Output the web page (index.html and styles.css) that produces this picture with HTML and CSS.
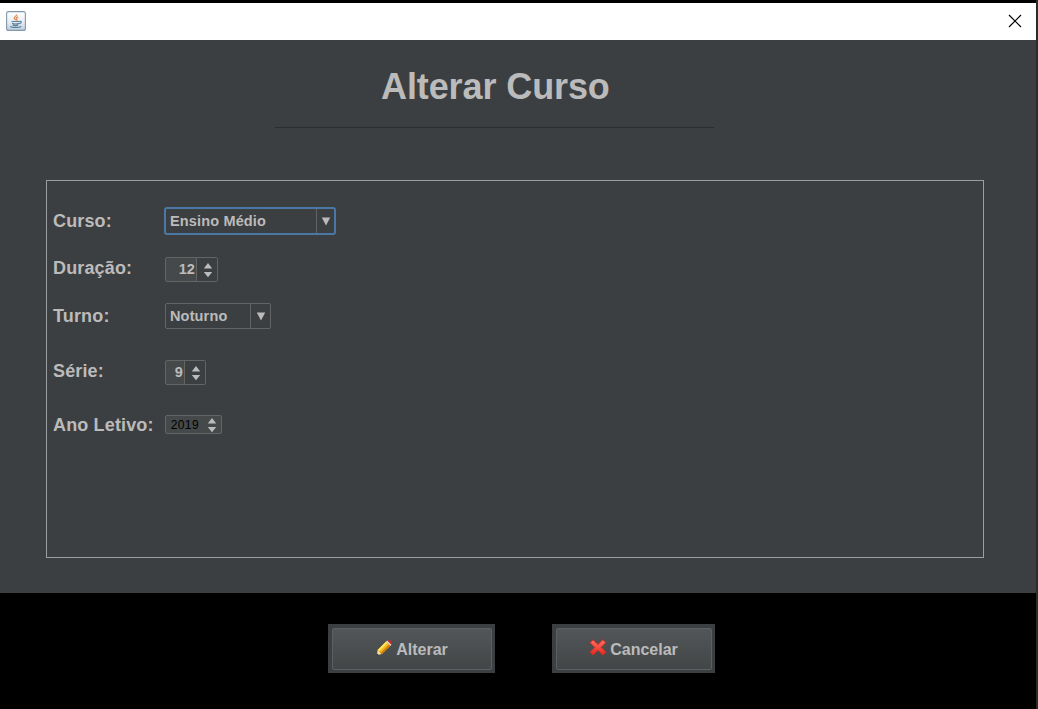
FILE: index.html
```html
<!DOCTYPE html>
<html lang="pt-BR">
<head>
<meta charset="utf-8">
<title>Alterar Curso</title>
<link rel="stylesheet" href="styles.css">
</head>
<body>
<div class="window">
  <header class="titlebar">
    <svg class="java" width="20" height="20" viewBox="0 0 20 20">
      <defs><linearGradient id="jb" x1="0" y1="0" x2="0" y2="1"><stop offset="0" stop-color="#fff"/><stop offset=".55" stop-color="#e8eef3"/><stop offset="1" stop-color="#b9cddd"/></linearGradient></defs>
      <rect x=".6" y=".6" width="18.8" height="18.8" rx="2" fill="url(#jb)" stroke="#8498aa" stroke-width="1.1"/>
      <path d="M10.600 3.500c.8 1.700-2.800 2.200-2.400 3.700.2.900 1.400 1.100 1.400 2.100M12.300 5.900c-2 .8-2.100 1.300-1.500 2.200.5.700.1 1.100-.4 1.500" fill="none" stroke="#e0905a" stroke-width="1.400"/>
      <path d="M5.500 10.500h8M6 12.400c2 .7 5 .7 7 0M6.700 14.200c2 .5 3.800.5 5.500 0M13.600 10.300c2.400-.5 2.200 2-.5 2.400M4.300 15.400c1.200 1.400 9.500 1.400 11 0" fill="none" stroke="#5d7f9a" stroke-width="1.200"/>
    </svg>
    <svg class="close" width="14" height="14" viewBox="0 0 14 14"><path d="M1 1l12 12M13 1L1 13" stroke="#000" stroke-width="1.200"/></svg>
  </header>
  <main class="content">
    <h1 class="title">Alterar Curso</h1>
    <div class="rule"></div>
    <section class="panel">
      <div class="row curso"><span class="label">Curso:</span>
        <div class="combo focused"><span class="value">Ensino Médio</span><span class="drop"><svg width="10" height="9" viewBox="0 0 10 9"><path d="M.8.500h8.400L5 8.500z"/></svg></span></div></div>
      <div class="row duracao"><span class="label">Duração:</span>
        <div class="spinner"><span class="num">12</span><span class="arrows"><svg width="10" height="16" viewBox="0 0 10 16"><path d="M.8 6.500h8.400L5 1zM.8 10h8.400L5 15.200z"/></svg></span></div></div>
      <div class="row turno"><span class="label">Turno:</span>
        <div class="combo"><span class="value">Noturno</span><span class="drop"><svg width="10" height="9" viewBox="0 0 10 9"><path d="M.8.500h8.400L5 8.500z"/></svg></span></div></div>
      <div class="row serie"><span class="label">Série:</span>
        <div class="spinner"><span class="num">9</span><span class="arrows"><svg width="10" height="16" viewBox="0 0 10 16"><path d="M.8 6.500h8.400L5 1zM.8 10h8.400L5 15.200z"/></svg></span></div></div>
      <div class="row ano"><span class="label">Ano Letivo:</span>
        <div class="spinner"><span class="num">2019</span><span class="arrows"><svg width="10" height="16" viewBox="0 0 10 16"><path d="M.8 6.500h8.400L5 1zM.8 10h8.400L5 15.200z"/></svg></span></div></div>
    </section>
  </main>
  <footer class="actions">
    <div class="frame alterar"><button class="btn">
      <svg width="16" height="16" viewBox="0 0 16 16">
        <path d="M.8 15.300l.8-5.200 4.300 4z" fill="#f4d9a0"/>
        <path d="M.6 15.500l.5-2 1.500 1.500z" fill="#28201a"/>
        <path d="M1.600 10.100L10.100 1.500l4.400 4.200-8.600 8.400z" fill="#f5b51b"/>
        <path d="M1.600 10.100L10.100 1.500l1.500 1.400-8.500 8.600z" fill="#ffe55a"/>
        <path d="M4.600 12.900l8.600-8.500 1.300 1.300-8.600 8.400z" fill="#cf7908"/>
        <path d="M10.100 1.500l1-1 4.400 4.200-1 1z" fill="#e8e8e8"/>
        <path d="M11.100.5q2.200-.9 3.700.4t.7 3.800z" fill="#d22b25"/>
      </svg><span>Alterar</span></button></div>
    <div class="frame cancelar"><button class="btn">
      <svg width="18" height="17" viewBox="0 0 18 17">
        <defs><linearGradient id="rx" x1="0" y1="0" x2="0" y2="1"><stop offset="0" stop-color="#ff7462"/><stop offset="1" stop-color="#e32620"/></linearGradient></defs>
        <path d="M4 .8L9 5.500 13.800.8l3 2.800L12.200 8.300l4.700 4.900-3 2.900L9 11.300l-4.900 4.800-3-2.800L5.800 8.400 1.100 3.700z" fill="url(#rx)" stroke="#d52b24" stroke-width="1" stroke-linejoin="round"/>
      </svg><span>Cancelar</span></button></div>
  </footer>
</div>
</body>
</html>
```
FILE: styles.css
```css
* { box-sizing: border-box; }
body {
  margin: 0;
  background: #2b2b2b;
  font-family: "Liberation Sans", Arial, sans-serif;
  font-weight: bold;
  color: #bbb;
}
.window {
  width: 1036px;
  height: 709px;
  border-top: 3px solid #000;
  display: flex;
  flex-direction: column;
  background: #000;
}
.titlebar {
  height: 37px;
  background: #fff;
  display: flex;
  justify-content: space-between;
  align-items: center;
  padding: 0 14px 1px 6px;
}
.titlebar svg { display: block; }
.content {
  height: 553px;
  background: #3c3f41;
  padding: 26px 52px 0 46px;
}
.title {
  margin: 0 0 0 335px;
  font-size: 36px;
  letter-spacing: -.1px;
  line-height: 42px;
  white-space: nowrap;
}
.rule {
  width: 439px;
  height: 1px;
  margin: 19px 0 0 229px;
  background: #2b2d2e;
}
.panel {
  height: 378px;
  margin-top: 52px;
  border: 1px solid #9b9d9e;
  padding: 26px 0 0 6px;
}
.row {
  display: grid;
  grid-template-columns: 112px max-content;
  grid-template-rows: 100%;
  align-items: center;
}
.label {
  font-size: 18px;
  line-height: 20px;
  letter-spacing: .15px;
  white-space: nowrap;
}
.curso { height: 28px; }
.duracao { height: 25px; margin-top: 22px; }
.turno { height: 26px; margin-top: 21px; }
.serie { height: 25px; margin-top: 31px; }
.ano { height: 19px; margin-top: 30px; }
.duracao .label, .serie .label { padding-bottom: 4px; }
.combo, .spinner {
  height: 100%;
  border: 1px solid #646464;
  border-radius: 2px;
  display: flex;
}
.combo { width: 106px; }
.value {
  flex: 1;
  padding-left: 4px;
  font-size: 14.5px;
  letter-spacing: .15px;
  line-height: 24px;
  white-space: nowrap;
}
.drop, .arrows {
  width: 20px;
  border-left: 1px solid #646464;
  display: flex;
  align-items: center;
  justify-content: center;
}
.drop svg, .arrows svg { fill: #bbb; display: block; }
.focused {
  width: 172px;
  margin-left: -1px;
  border: 2px solid #4b77a4;
  border-radius: 3px;
}
.focused .drop { width: 18px; padding-left: 1px; }
.focused .value { padding-left: 4px; }
.spinner { background: #45494a; width: 53px; }
.serie .spinner { width: 41px; }
.ano .spinner { width: 57px; }
.arrows { width: 21px; padding: 1px 0 0 2px; background: #3c3f41; }
.num {
  flex: 1;
  text-align: right;
  padding-right: 1px;
  font-size: 14.5px;
  letter-spacing: .1px;
  line-height: 23px;
}
.ano .num {
  color: #000;
  font-size: 12px;
  font-weight: normal;
  letter-spacing: .4px;
  line-height: 18px;
  padding-right: 3px;
}
.ano .arrows { border: 0; background: none; width: 19px; padding-left: 0; }
.actions {
  height: 116px;
  padding: 31px 0 0 328px;
  display: flex;
  gap: 57px;
}
.frame {
  height: 49px;
  background: #3c3f41;
  padding: 4px 3px 3px 4px;
}
.alterar { width: 167px; }
.cancelar { width: 163px; }
.btn {
  width: 100%;
  height: 42px;
  border: 1px solid #5c6061;
  border-radius: 2px;
  background: linear-gradient(#525658, #424647);
  color: #bbb;
  font: bold 16px "Liberation Sans", Arial, sans-serif;
  display: flex;
  align-items: center;
  justify-content: center;
  gap: 4px;
  padding: 0;
}
.btn svg { display: block; margin-bottom: 3px; }
.btn span { padding-top: 2px; }
.cancelar .btn { gap: 3px; padding-right: 1px; }
```
